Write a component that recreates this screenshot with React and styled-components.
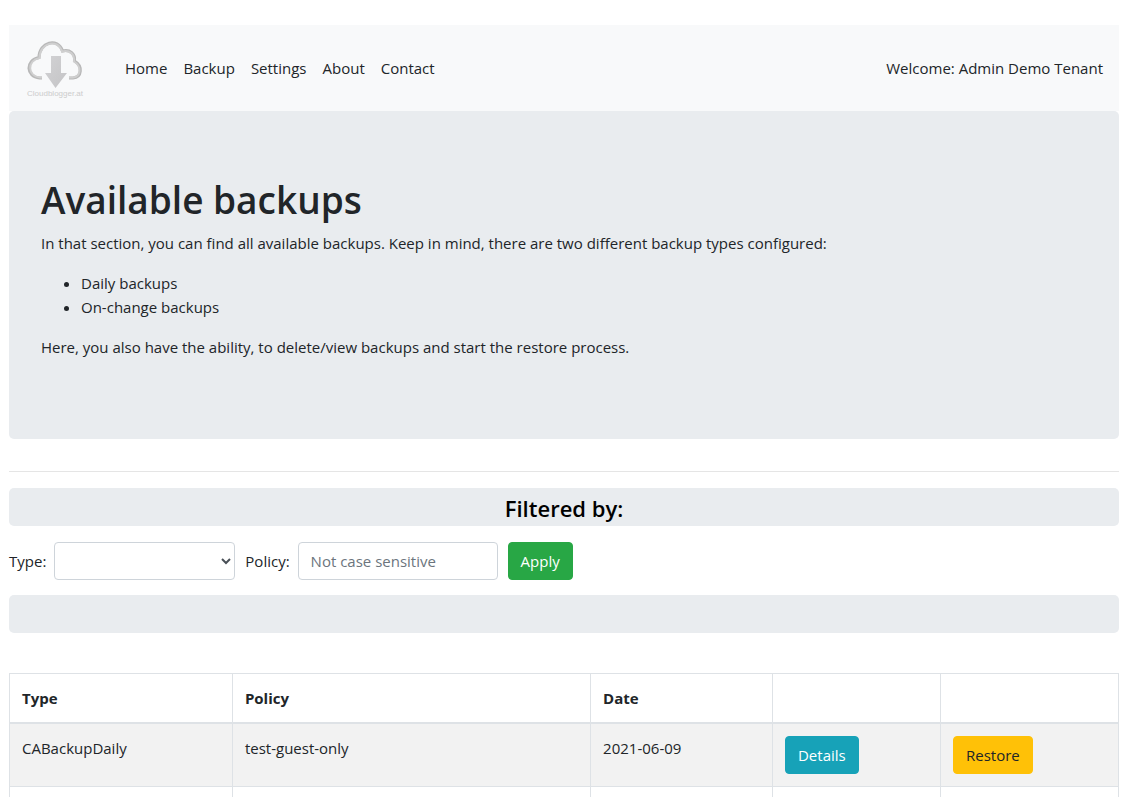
import React from "react";
import styled, { createGlobalStyle } from "styled-components";

const GlobalStyle = createGlobalStyle`
  *, *::before, *::after { box-sizing: border-box; }
  body {
    margin: 0;
    background: #fff;
    color: #212529;
    font-family: "Segoe UI", "Open Sans", "Noto Sans", sans-serif;
    font-size: 15px;
    line-height: 24px;
  }
  button, input, select { font: inherit; }
`;

const Page = styled.div`
  height: 100vh;
  overflow: hidden;
  padding: 25px 15px 0 9px;
`;

const Navbar = styled.nav`
  display: flex;
  align-items: center;
  padding: 8px 16px;
  background: #f8f9fa;
`;

const Brand = styled.a`
  display: flex;
  margin-right: 24px;
`;

const LogoText = styled.text`
  font-family: "Liberation Sans", sans-serif;
  font-size: 8px;
  fill: #cccccc;
`;

const NavList = styled.ul`
  display: flex;
  flex: 1;
  gap: 16px;
  margin: 0;
  padding: 0 0 0 16px;
  list-style: none;
`;

const NavLink = styled.a`
  color: #212529;
  text-decoration: none;
`;

const Jumbotron = styled.header`
  padding: 64px 32px;
  border-radius: 5px;
  background: #e9ecef;
`;

const Title = styled.h1`
  margin: 0 0 6px;
  font-size: 37px;
  font-weight: 600;
  line-height: 50px;
`;

const Paragraph = styled.p`
  margin: 0 0 16px;
`;

const BulletList = styled.ul`
  margin: 0 0 16px;
  padding-left: 40px;
`;

const Divider = styled.hr`
  margin: 32px 0 16px;
  border: 0;
  border-top: 1px solid #e5e5e5;
`;

const Band = styled.div`
  height: 38px;
  border-radius: 5px;
  background: #e9ecef;
`;

const BandTitle = styled.h2`
  margin: 0;
  color: #000;
  font-size: 22px;
  font-weight: 600;
  line-height: 40px;
  text-align: center;
`;

const FilterForm = styled.form`
  display: flex;
  align-items: center;
  gap: 10px;
  padding: 16px 0 15px;
`;

const Field = styled.label`
  display: flex;
  align-items: center;
  gap: 8px;
`;

const Select = styled.select`
  width: 181px;
  height: 38px;
  padding: 6px 12px;
  border: 1px solid #ced4da;
  border-radius: 4px;
  background: #fff;
  color: #495057;
`;

const TextInput = styled.input`
  width: 200px;
  height: 38px;
  padding: 6px 12px;
  border: 1px solid #ced4da;
  border-radius: 4px;
  color: #495057;
  &::placeholder { color: #6c757d; opacity: 1; }
`;

const tones = {
  success: ["#28a745", "#fff"],
  info: ["#17a2b8", "#fff"],
  warning: ["#ffc107", "#212529"],
};

const Button = styled.button`
  height: 38px;
  padding: 6px 12px;
  border: 1px solid ${(p) => tones[p.$tone][0]};
  border-radius: 4px;
  background: ${(p) => tones[p.$tone][0]};
  color: ${(p) => tones[p.$tone][1]};
`;

const Table = styled.table`
  width: 100%;
  margin-top: 40px;
  border: 1px solid #dee2e6;
  border-collapse: collapse;
  table-layout: fixed;
`;

const Column = styled.col`
  width: ${(p) => p.$share}%;
`;

const HeadCell = styled.th`
  padding: 12px;
  border: 1px solid #dee2e6;
  border-bottom-width: 2px;
  font-weight: 700;
  text-align: left;
`;

const Row = styled.tr`
  background: ${(p) => (p.$shaded ? "#f2f2f2" : "#fff")};
`;

const Cell = styled.td`
  padding: 12px;
  border: 1px solid #dee2e6;
  vertical-align: top;
`;

function Logo() {
  return (
    <svg width="60" height="70" viewBox="0 0 60 70" role="img" aria-label="Cloudblogger.at">
      <defs>
        <linearGradient id="arrow" x1="0" x2="1" y1="0" y2="1">
          <stop offset="0" stopColor="#d2d2d4" />
          <stop offset="1" stopColor="#c4c4c6" />
        </linearGradient>
      </defs>
      <path
        d="M17 45H14.500C1 44 0 27 14 24.500C14 9 33 4 37.500 18C45 16 50.500 21 49.500 28C58 33 57 44 48 45H44"
        fill="none" stroke="#b8b8b8" strokeWidth="3"
      />
      <path
        d="M17 44.500H15C2.500 43.500 1.500 27.500 14.500 25C14.500 10 32.500 4.500 37 18.500C44.500 16.500 50 21.500 49 28.500C57 33.500 56 43.500 48 44.500H44"
        fill="none" stroke="#cfcfcf" strokeWidth="2"
      />
      <path d="M26 23H36V40H42L30.500 55L20 40H26Z" fill="url(#arrow)" />
      <LogoText x="2" y="63">Cloudblogger.at</LogoText>
    </svg>
  );
}

const links = ["Home", "Backup", "Settings", "About", "Contact"];
const backups = [{ type: "CABackupDaily", policy: "test-guest-only", date: "2021-06-09" }];

export default function App() {
  return (
    <>
      <GlobalStyle />
      <Page>
        <Navbar>
          <Brand href="#home"><Logo /></Brand>
          <NavList>
            {links.map((label) => (
              <li key={label}><NavLink href={`#${label.toLowerCase()}`}>{label}</NavLink></li>
            ))}
          </NavList>
          <span>Welcome: Admin Demo Tenant</span>
        </Navbar>

        <Jumbotron>
          <Title>Available backups</Title>
          <Paragraph>
            In that section, you can find all available backups. Keep in mind, there are two different backup types configured:
          </Paragraph>
          <BulletList>
            <li>Daily backups</li>
            <li>On-change backups</li>
          </BulletList>
          <Paragraph>Here, you also have the ability, to delete/view backups and start the restore process.</Paragraph>
        </Jumbotron>

        <Divider />
        <Band><BandTitle>Filtered by:</BandTitle></Band>
        <FilterForm onSubmit={(e) => e.preventDefault()}>
          <Field>
            Type:
            <Select defaultValue=""><option value="" /></Select>
          </Field>
          <Field>
            Policy:
            <TextInput type="text" placeholder="Not case sensitive" />
          </Field>
          <Button type="submit" $tone="success">Apply</Button>
        </FilterForm>
        <Band />

        <Table>
          <colgroup>
            {[20.1, 32.3, 16.4, 15.15, 16.05].map((share, i) => <Column key={i} $share={share} />)}
          </colgroup>
          <thead>
            <tr>
              <HeadCell>Type</HeadCell>
              <HeadCell>Policy</HeadCell>
              <HeadCell>Date</HeadCell>
              <HeadCell />
              <HeadCell />
            </tr>
          </thead>
          <tbody>
            {backups.map((b) => (
              <Row key={b.policy} $shaded>
                <Cell>{b.type}</Cell>
                <Cell>{b.policy}</Cell>
                <Cell>{b.date}</Cell>
                <Cell><Button type="button" $tone="info">Details</Button></Cell>
                <Cell><Button type="button" $tone="warning">Restore</Button></Cell>
              </Row>
            ))}
            <Row><Cell /><Cell /><Cell /><Cell /><Cell /></Row>
          </tbody>
        </Table>
      </Page>
    </>
  );
}
